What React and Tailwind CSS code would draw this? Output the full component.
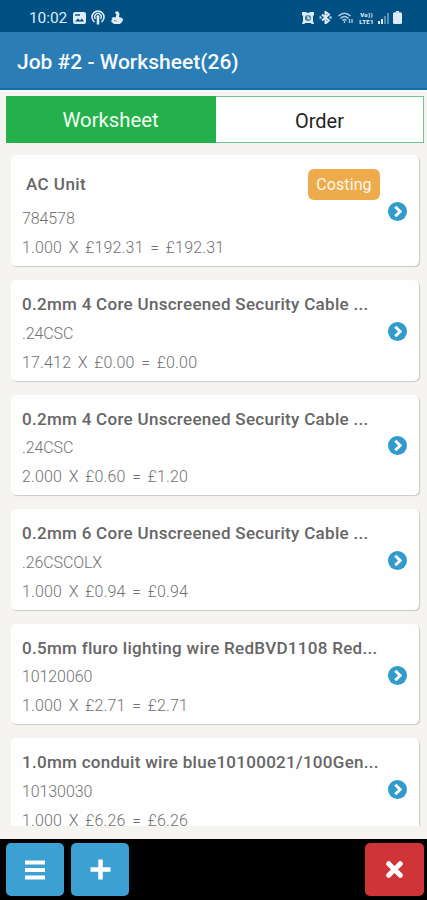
import React from "react";

const ITEMS = [
  {
    name: "AC Unit",
    code: "784578",
    total: "1.000 X £192.31 = £192.31",
    badge: "Costing",
  },
  {
    name: "0.2mm 4 Core Unscreened Security Cable ...",
    code: ".24CSC",
    total: "17.412 X £0.00 = £0.00",
  },
  {
    name: "0.2mm 4 Core Unscreened Security Cable ...",
    code: ".24CSC",
    total: "2.000 X £0.60 = £1.20",
  },
  {
    name: "0.2mm 6 Core Unscreened Security Cable ...",
    code: ".26CSCOLX",
    total: "1.000 X £0.94 = £0.94",
  },
  {
    name: "0.5mm fluro lighting wire RedBVD1108 Red...",
    code: "10120060",
    total: "1.000 X £2.71 = £2.71",
  },
  {
    name: "1.0mm conduit wire blue10100021/100Gen...",
    code: "10130030",
    total: "1.000 X £6.26 = £6.26",
  },
];

const StatusBar = () => (
  <div className="flex h-8 shrink-0 items-center justify-between bg-[#005083] pt-[3px] pr-[25px] pl-[29px] text-[#dcebf5]">
    <div className="flex items-center">
      <span className="w-[44px] text-[15.5px] leading-4 tracking-[-0.1px]">10:02</span>
      {/* gallery */}
      <svg className="h-3 w-[13px]" viewBox="0 0 13 12">
        <rect width="13" height="12" rx="2" fill="currentColor" />
        <path d="M2 9.500l3-3 2 2 2-2 2 3z" fill="#005083" />
        <path d="M2 3h5" stroke="#005083" strokeWidth="1.4" />
      </svg>
      {/* podcast */}
      <svg className="ml-[5px] h-[15px] w-[14px]" viewBox="0 0 14 15" fill="none" stroke="currentColor">
        <path d="M3.500 12A6 6 0 1 1 10.500 12" strokeWidth="1.600" />
        <path d="M4.500 9A3.300 3.300 0 1 1 9.500 9" strokeWidth="1.300" />
        <circle cx="7" cy="6.500" r="1.500" fill="currentColor" stroke="none" />
        <path d="M7 7v7.500" strokeWidth="2.600" />
      </svg>
      {/* pointing hand */}
      <svg className="ml-[6px] h-[13px] w-3" viewBox="0 0 12 13" fill="currentColor">
        <path d="M4 1q4-2 4.500 2L8 6l3 1q2 1 0 4l-2 2H3L.500 11q-1-2 1-2-2-2 1-3l2 .500 1-3-1-1z" />
        <path d="M3 9.500l2.500.500" stroke="#005083" strokeWidth=".6" />
      </svg>
    </div>

    <div className="flex items-center">
      {/* alarm */}
      <svg className="h-3 w-3" viewBox="0 0 12 12">
        <path d="M0 0h3.500L6 1l2.500-1H12v3l-1 1v5l1 3H9.500L9 11H3l-.500 1H0l1-3V4L0 3z" fill="currentColor" />
        <circle cx="6" cy="6" r="3" fill="#3f7ba3" />
        <path d="M6 3.500V6.500h2" fill="none" stroke="currentColor" strokeWidth="1.300" />
      </svg>
      {/* bluetooth */}
      <svg className="ml-[5px] h-[13px] w-[13px]" viewBox="0 0 13 13" fill="none" stroke="currentColor">
        <path d="M3 3.500l7 6-3.500 3V.800L10 3.500l-7 6" strokeWidth="1.900" />
        <path d="M.500 6.500h2M10.500 6.500h2" strokeWidth="2.200" />
      </svg>
      {/* wifi */}
      <svg className="ml-[6px] h-3 w-[15px] opacity-80" viewBox="0 0 15 12" fill="none" stroke="currentColor">
        <path d="M.500 4Q6.500-1.500 12.500 4M2.500 6.500q4-4 8 0M4.500 8.500q2-2 4 0" strokeWidth="1.500" />
        <path d="M6.500 9v2M11.500 7v4M14 7v4" strokeWidth="1.300" />
      </svg>
      <div className="ml-[5px] w-[17px] text-center text-[6px] leading-[7px] font-black tracking-[0.3px]">
        <div>Vo))</div>
        <div>LTE1</div>
      </div>
      {/* signal */}
      <svg className="ml-[3px] h-3 w-[11px]" viewBox="0 0 11 12" fill="currentColor">
        <path d="M0 9h2v3H0zM3 7h2v5H3z" />
        <path d="M6 4h2v8H6zM9 1h2v11H9z" opacity=".4" />
      </svg>
      {/* battery */}
      <svg className="ml-[4px] h-[13px] w-[9px]" viewBox="0 0 9 13" fill="currentColor">
        <path d="M3 0h3v1.500H3z" />
        <rect y="1.200" width="9" height="11.800" rx="1.500" />
      </svg>
    </div>
  </div>
);

const ItemCard = ({ item }) => (
  <div className="flex shrink-0 items-center rounded-[5px] bg-[#fefefe] pr-[12px] pl-[11px] shadow-[1px_1px_1px_#c9c9c7]">
    <div className="min-w-0 flex-1 text-[#727272]">
      {item.badge ? (
        <div className="flex h-[49px] items-center justify-between pt-[9px] pr-[8px] pl-[4px]">
          <span className="pt-[1px] text-[17px] font-medium tracking-[0.45px] text-[#666666]">{item.name}</span>
          <span className="flex h-[31px] w-[72px] items-center justify-center rounded-[6px] bg-[#edab4b] pt-[2px] text-[16px] tracking-[0.1px] text-[#fff9ed]">
            {item.badge}
          </span>
        </div>
      ) : (
        <h2 className="h-[38.600px] pt-[10px] text-[17px] leading-[29px] font-medium tracking-[0.29px] whitespace-nowrap text-[#666666]">
          {item.name}
        </h2>
      )}
      <p className="h-[29px] text-[16px] leading-[29px] font-light tracking-[-0.1px]">{item.code}</p>
      <p className="h-[33px] text-[16px] leading-[29px] font-light tracking-[0.16px] [word-spacing:2.500px]">
        {item.total}
      </p>
    </div>
    <svg className="mt-[2px] h-[19px] w-[19px] shrink-0" viewBox="0 0 19 19">
      <circle cx="9.500" cy="9.500" r="9.500" fill="#309bcc" />
      <path d="M7.300 4.700l4.800 4.800-4.800 4.800" fill="none" stroke="white" strokeWidth="3" />
    </svg>
  </div>
);

const App = () => {
  return (
    <div className="flex h-[900px] w-[427px] flex-col overflow-hidden bg-[#f5f4f1] font-[Roboto,sans-serif]">
      <StatusBar />

      <header className="flex h-[58px] shrink-0 items-center border-b-2 border-[#0e6fb1] bg-[#2b7db5] pt-[5px] pl-[17px]">
        <h1 className="text-[21px] font-medium whitespace-nowrap text-[#f5faff]">
          Job #2 - Worksheet(26)
        </h1>
      </header>

      {/* TABS */}
      <div className="mt-[6px] mr-[3px] ml-[6px] flex h-[47px] shrink-0 border border-[#72c590] bg-white text-[20px]">
        <div className="-my-px -ml-px flex w-[210px] items-center justify-center bg-[#24b14b] pt-[2px] pr-[1px] text-[20.3px] text-[#f2fff4]">
          Worksheet
        </div>
        <div className="flex flex-1 items-center justify-center pt-[2px] text-[#242424]">Order</div>
      </div>

      {/* ITEMS */}
      <div className="mt-[12px] mr-[2px] flex h-[671px] shrink-0 flex-col gap-[14px] overflow-hidden pr-[6px] pl-[11px]">
        {ITEMS.map((item, i) => (
          <ItemCard key={i} item={item} />
        ))}
      </div>

      {/* ACTIONS */}
      <footer className="mt-auto flex h-[61px] shrink-0 items-center bg-black pr-[3px] pl-[6px] text-white">
        <button className="flex h-[53px] w-[58px] items-center justify-center rounded-[5px] bg-[#3ca0d2]">
          <svg className="h-5 w-5" viewBox="0 0 20 20" stroke="currentColor" strokeWidth="4">
            <path d="M0 2.500h20M0 10h20M0 17.500h20" />
          </svg>
        </button>
        <button className="ml-[7px] flex h-[53px] w-[58px] items-center justify-center rounded-[5px] bg-[#3ca0d2]">
          <svg className="h-[21px] w-[21px]" viewBox="0 0 21 21" stroke="currentColor" strokeWidth="4.500">
            <path d="M.500 10.500h20M10.500.500v20" />
          </svg>
        </button>
        <button className="ml-auto flex h-[53px] w-[59px] items-center justify-center rounded-[5px] bg-[#cf3436]">
          <svg className="h-[17px] w-[17px]" viewBox="0 0 17 17" stroke="currentColor" strokeWidth="5">
            <path d="M2.700 2.700l11.600 11.600M14.300 2.700L2.700 14.300" strokeLinecap="round" />
          </svg>
        </button>
      </footer>
    </div>
  );
};

export default App;
